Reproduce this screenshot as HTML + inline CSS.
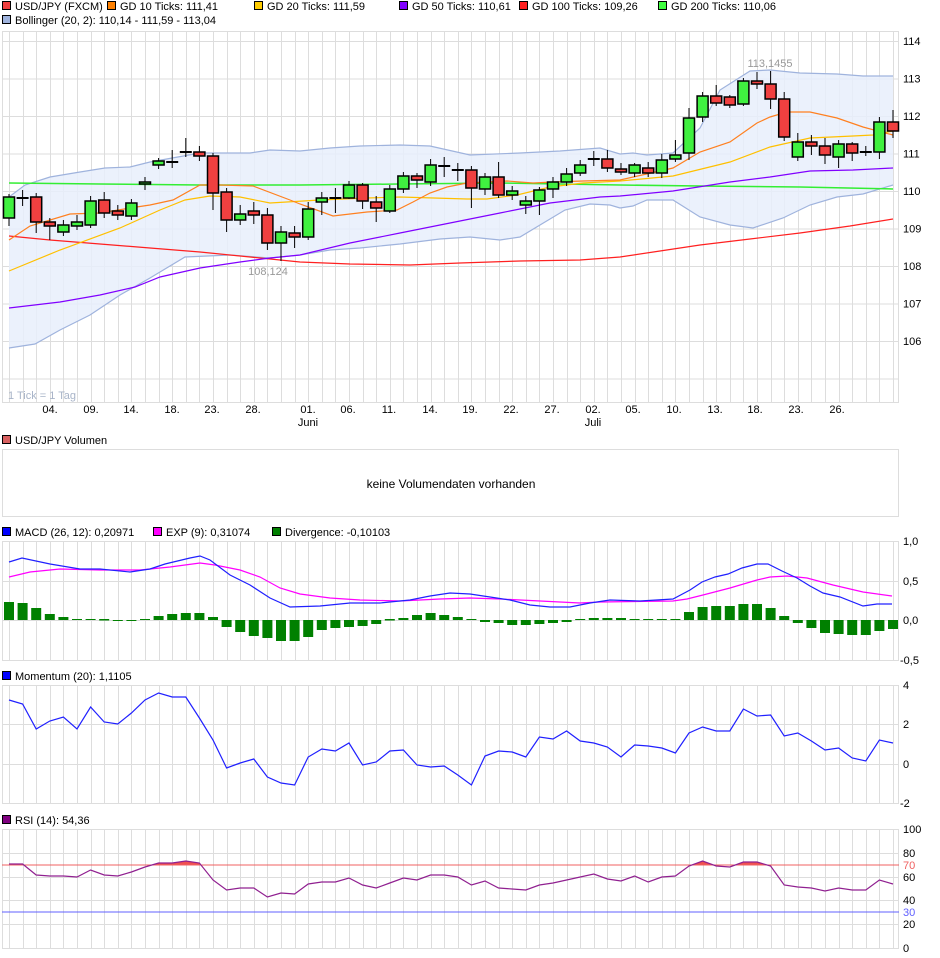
<!DOCTYPE html>
<html><head><meta charset="utf-8"><style>
body{margin:0;background:#fff;width:940px;height:958px;overflow:hidden}
svg{display:block;font-family:"Liberation Sans",sans-serif}
</style></head><body>
<svg id="s" width="940" height="958" xmlns="http://www.w3.org/2000/svg"></svg>
<script>
var S=document.getElementById('s'),h='';
var X=function(i){return 9+13.6*i};
function txt(x,y,t,o){o=o||{};h+='<text x="'+x+'" y="'+y+'" font-size="'+(o.fs||11)+'" fill="'+(o.c||'#000')+'"'+(o.a?' text-anchor="'+o.a+'"':'')+'>'+t+'</text>';}
function leg(x,y,c,t){h+='<rect x="'+(x+0.5)+'" y="'+(y-8.5)+'" width="8" height="8" fill="'+c+'" stroke="#000" stroke-width="1"/>';txt(x+13,y,t);}
function pl(pts,c,w){h+='<polyline fill="none" stroke="'+c+'" stroke-width="'+(w||1.2)+'" points="'+pts.map(function(p){return p.join(',')}).join(' ')+'"/>';}
function grid(y0,y1,hs){h+='<rect x="2.5" y="'+y0+'.5" width="896" height="'+(y1-y0)+'" fill="#fff" stroke="#ddd"/>';
 for(var i=0;i<66;i++){var x=Math.round(X(i))+0.5;h+='<line x1="'+x+'" y1="'+y0+'" x2="'+x+'" y2="'+(y1+ (y0==31?0:0))+'" stroke="#ddd"/>';}
 hs.forEach(function(y){h+='<line x1="2" y1="'+(y+0.5)+'" x2="899" y2="'+(y+0.5)+'" stroke="#ddd"/>';});}
// legends
leg(2,10,'#f04040','USD/JPY (FXCM)');leg(107,10,'#ff8000','GD 10 Ticks: 111,41');leg(254,10,'#ffcc00','GD 20 Ticks: 111,59');
leg(399,10,'#8000ff','GD 50 Ticks: 110,61');leg(519,10,'#ff2020','GD 100 Ticks: 109,26');leg(658,10,'#40ff40','GD 200 Ticks: 110,06');
leg(2,24,'#9fb3dd','Bollinger (20, 2): 110,14 - 111,59 - 113,04');
// main
var hy=[];for(var k=0;k<10;k++)hy.push(41+k*37.5);
grid(31,402,hy);
for(var k=0;k<9;k++)txt(903,45+k*37.5,114-k);
var up=[[9,197],[25,185],[50,177],[80,172],[105,168],[130,167],[150,162],[200,153],[250,153],[270,150],[300,151],[330,148],[360,146],[400,145],[430,146],[470,155],[520,153],[560,151],[600,148],[620,154],[633,153],[647,155],[673,153],[700,128],[720,90],[750,71],[770,70],[800,73],[837,74],[863,76],[893,76]];
var lo=[[9,348],[35,344],[60,330],[90,315],[120,295],[150,278],[185,257],[230,255],[270,258],[300,255],[330,250],[360,248],[400,244],[440,239],[470,237],[500,240],[520,237],[545,222],[565,210],[590,204],[610,205],[620,208],[633,206],[647,200],[673,200],[700,217],[730,225],[753,228],[783,218],[810,205],[837,197],[863,194],[893,185]];
h+='<polygon fill="#e8eefc" fill-opacity="0.85" points="'+up.concat(lo.slice().reverse()).map(function(p){return p.join(',')}).join(' ')+'"/>';
pl(up,'#9fb3dd');pl(lo,'#9fb3dd');
pl([[9,183],[100,184],[200,185],[300,185],[400,184],[500,183],[620,185],[700,186],[800,187],[893,189]],'#33ee33',1.5);
pl([[9,236],[50,240],[100,244],[150,248],[200,252],[250,257],[300,262],[350,264],[410,265],[460,263],[520,261],[580,260],[620,257],[660,251],[700,245],[750,239],[800,233],[850,226],[893,219]],'#ff2020');
pl([[9,308],[60,302],[100,295],[135,287],[160,277],[200,268],[240,262],[270,258],[300,255],[350,243],[400,233],[450,223],[500,213],[550,203],[600,197],[620,196],[673,191],[730,182],[770,177],[810,171],[853,170],[893,168]],'#8000ff');
pl([[9,271],[60,250],[120,228],[160,210],[185,200],[210,196],[240,197],[270,203],[320,200],[367,198],[400,197],[467,199],[487,199],[517,195],[550,187],[583,183],[620,181],[673,176],[730,162],[770,147],[810,138],[853,136],[873,135],[893,131]],'#ffc000');
pl([[9,240],[30,226],[70,214],[100,213],[130,208],[150,205],[173,200],[200,185],[220,185],[253,186],[290,200],[300,204],[333,216],[367,212],[397,210],[413,202],[430,193],[447,187],[467,183],[487,182],[507,181],[533,183],[553,182],[583,181],[620,180],[673,168],[700,152],[730,142],[757,123],[770,117],[787,112],[810,112],[837,118],[863,127],[893,135]],'#ff8020');
// candles [open, close, high, low] in px
var C=[[218,197,194,226],[198,198,190,206],[197,222,193,233],[222,226,218,240],[232,225,220,236],[226,222,215,230],[225,201,196,228],[200,213,192,218],[211,215,205,220],[216,203,199,220],[184,182,177,190],[165,161,158,169],[162,162,150,168],[152,152,138,157],[152,156,146,161],[156,193,153,210],[192,220,188,232],[220,214,205,225],[211,215,202,224],[215,243,208,250],[243,232,226,261],[233,237,226,248],[237,209,202,240],[202,198,192,215],[198,198,188,213],[198,185,181,199],[185,201,183,209],[202,208,196,222],[211,189,185,213],[189,176,172,193],[176,180,173,188],[182,165,159,186],[166,166,157,177],[170,170,163,181],[170,188,166,208],[189,177,173,195],[177,195,162,198],[195,191,186,200],[205,201,196,214],[201,190,187,215],[189,182,177,198],[182,174,168,186],[173,165,160,176],[159,159,151,166],[159,168,150,172],[169,172,163,175],[173,165,163,177],[168,173,162,177],[173,160,154,178],[159,155,140,162],[153,118,108,160],[117,96,92,122],[96,103,85,106],[97,105,95,108],[104,81,78,106],[81,84,72,89],[84,99,71,109],[99,137,92,141],[157,142,133,161],[142,146,135,155],[146,155,138,164],[157,144,140,168],[144,153,142,161],[152,152,146,156],[152,122,117,159],[122,131,110,138]];
C.forEach(function(c,i){var x=X(i),t=Math.min(c[0],c[1]),b=Math.max(c[0],c[1]);
 h+='<line x1="'+x+'" y1="'+c[2]+'" x2="'+x+'" y2="'+c[3]+'" stroke="#000"/>';
 if(b-t<1.5){h+='<line x1="'+(x-6)+'" y1="'+t+'" x2="'+(x+6)+'" y2="'+t+'" stroke="#000" stroke-width="2"/>';}
 else h+='<rect x="'+(x-5.5)+'" y="'+t+'" width="11" height="'+(b-t)+'" fill="'+(c[1]<c[0]?'#40f040':'#f04040')+'" stroke="#000" stroke-width="1.5"/>';});
txt(268,275,'108,124',{c:'#999',a:'middle'});txt(770,67,'113,1455',{c:'#999',a:'middle'});
txt(8,399,'1 Tick = 1 Tag',{c:'#a8b4c8'});
var dl=[[50,'04.'],[91,'09.'],[131,'14.'],[172,'18.'],[212,'23.'],[253,'28.'],[308,'01.'],[348,'06.'],[389,'11.'],[430,'14.'],[470,'19.'],[511,'22.'],[552,'27.'],[593,'02.'],[633,'05.'],[674,'10.'],[715,'13.'],[755,'18.'],[796,'23.'],[837,'26.']];
dl.forEach(function(d){txt(d[0],413,d[1],{a:'middle'})});txt(308,426,'Juni',{a:'middle'});txt(593,426,'Juli',{a:'middle'});
// volume
leg(2,444,'#d86060','USD/JPY Volumen');
h+='<rect x="2.5" y="449.5" width="896" height="67" fill="#fff" stroke="#ddd"/>';
txt(451,488,'keine Volumendaten vorhanden',{fs:12,a:'middle'});
// MACD
leg(2,536,'#0000ff','MACD (26, 12): 0,20971');leg(153,536,'#ff00ff','EXP (9): 0,31074');leg(272,536,'#008000','Divergence: -0,10103');
grid(541,660,[541,581,620,660]);
txt(903,545,'1,0');txt(903,585,'0,5');txt(903,624,'0,0');txt(900,664,'-0,5');
var hv=[-18,-17,-12,-6,-3,-1,-1,0,1,1,-1,-4,-6,-7,-7,-3,7,12,16,18,21,21,17,10,8,7,6,4,0,-2,-5,-7,-5,-3,-1,2,3,5,5,4,3,2,-1,-2,-2,-2,-1,-1,-1,-1,-8,-13,-14,-14,-16,-16,-12,-4,3,8,13,14,15,15,11,9];
hv.forEach(function(v,i){var x=X(i)-5;if(v<0)h+='<rect x="'+x+'" y="'+(620+v)+'" width="10" height="'+(-v)+'" fill="#008000"/>';else if(v>0)h+='<rect x="'+x+'" y="620" width="10" height="'+v+'" fill="#008000"/>';else h+='<rect x="'+x+'" y="619" width="10" height="1.5" fill="#008000"/>';});
pl([[9,577],[30,572],[60,569],[100,570],[140,570],[170,567],[200,563],[215,565],[240,570],[260,577],[280,588],[300,594],[330,598],[360,600],[400,601],[440,599],[470,598],[500,599],[540,601],[580,603],[600,602],[673,601],[687,599],[703,595],[730,588],[757,580],[770,577],[787,576],[807,578],[833,585],[863,592],[892,596]],'#ff00ff');
pl([[9,562],[22,558],[50,564],[80,569],[100,569],[130,572],[150,569],[165,564],[190,558],[200,556],[210,560],[230,575],[250,585],[270,598],[290,607],[320,606],[350,603],[380,603],[410,600],[430,596],[450,593],[470,594],[490,597],[510,600],[530,605],[550,607],[570,607],[590,603],[610,600],[640,601],[673,599],[690,590],[702,582],[715,577],[728,574],[742,568],[757,564],[768,564],[782,571],[797,578],[810,586],[823,593],[840,597],[863,606],[877,604],[892,604]],'#2020ff');
// Momentum
leg(2,680,'#0000ff','Momentum (20): 1,1105');
grid(685,803,[685,724,764,803]);
txt(903,689,'4');txt(903,728,'2');txt(903,768,'0');txt(900,807,'-2');
var mv=[700,704,729,721,717,729,707,722,724,713,700,693,697,697,718,740,768,763,759,777,783,785,757,749,751,743,765,762,751,750,765,767,766,775,785,756,751,752,757,737,739,731,741,743,747,757,745,746,748,753,733,727,731,731,709,716,715,736,733,741,750,748,758,761,740,743];
pl(mv.map(function(v,i){return [X(i),v]}),'#2020ff');
// RSI
leg(2,824,'#800080','RSI (14): 54,36');
grid(829,948,[829,853,877,900,924,948]);
var rv=[864,864,875,876,876,877,870,875,876,872,867,863,863,861,863,880,890,888,888,897,893,894,884,882,882,878,885,888,883,878,880,875,875,877,885,881,888,889,890,885,883,880,877,874,879,881,876,882,877,876,866,861,866,867,862,862,866,885,887,888,891,888,890,890,880,884];
var rp=rv.map(function(v,i){return [X(i),v]});
h+='<defs><clipPath id="ca"><rect x="0" y="820" width="900" height="45"/></clipPath></defs>';
h+='<polygon clip-path="url(#ca)" fill="#f05050" points="9,865 '+rp.map(function(p){return p.join(',')}).join(' ')+' 893,865"/>';
h+='<line x1="2" y1="865" x2="899" y2="865" stroke="#f06060"/><line x1="2" y1="912" x2="899" y2="912" stroke="#6060ff"/>';
pl(rp,'#902090');
txt(903,833,'100');txt(903,857,'80');txt(903,869,'70',{c:'#f06060'});txt(903,881,'60');txt(903,904,'40');txt(903,916,'30',{c:'#6060ff'});txt(903,928,'20');txt(903,952,'0');
S.innerHTML=h;
</script>
</body></html>
